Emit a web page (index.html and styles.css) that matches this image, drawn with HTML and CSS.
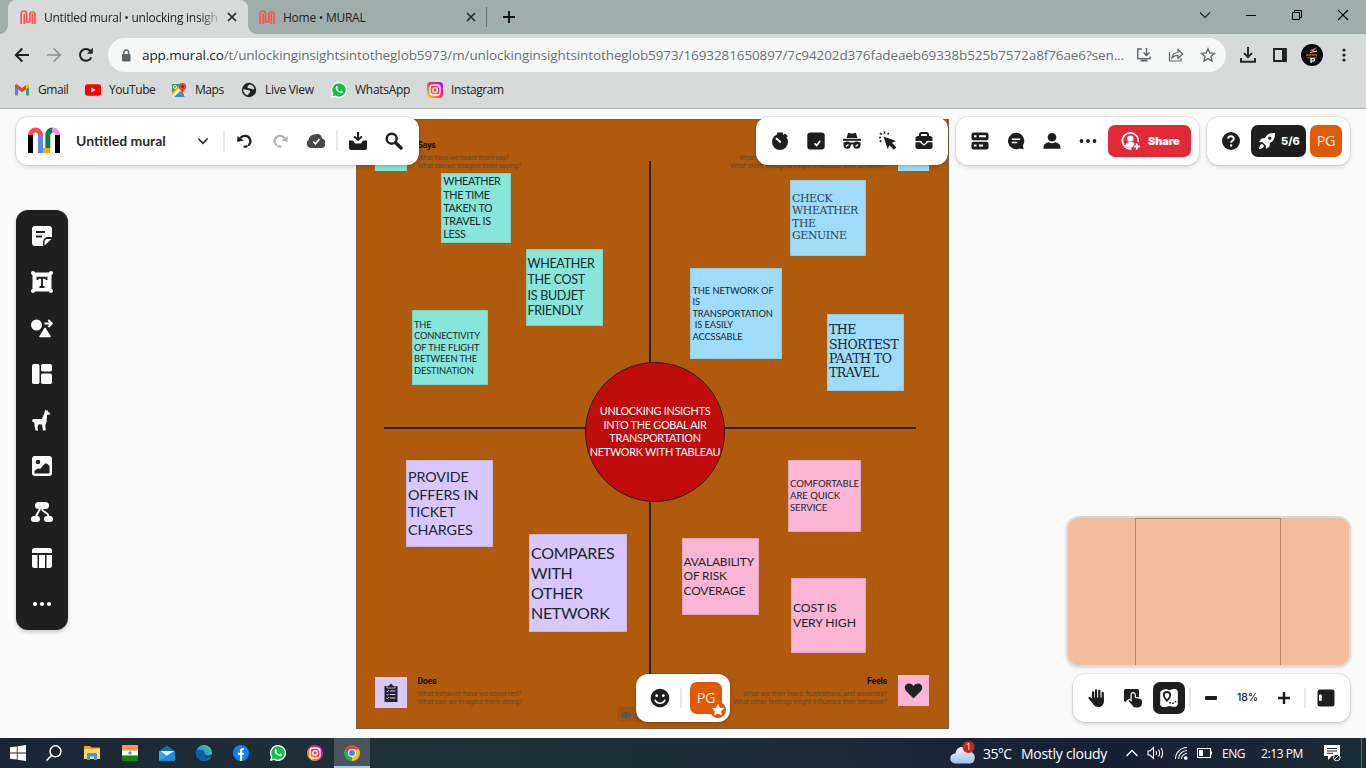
FILE: index.html
```html
<!DOCTYPE html>
<html lang="en">
<head>
<meta charset="utf-8">
<title>Untitled mural</title>
<link rel="stylesheet" href="styles.css">
</head>
<body>
<svg class="defs" width="0" height="0">
  <defs>
    <linearGradient id="ig" x1="0" y1="1" x2="1" y2="0"><stop offset="0" stop-color="#fd5"/><stop offset=".3" stop-color="#ff7a2a"/><stop offset=".6" stop-color="#f0246f"/><stop offset="1" stop-color="#a020f0"/></linearGradient>
    <linearGradient id="edge" x1="0" y1="1" x2="1" y2="0"><stop offset="0" stop-color="#0c59a4"/><stop offset=".5" stop-color="#1b9de2"/><stop offset="1" stop-color="#5fdc5a"/></linearGradient>
    <linearGradient id="cl" x1="0" y1="0" x2="0" y2="1"><stop offset="0" stop-color="#f1f5fd"/><stop offset="1" stop-color="#9fc0f0"/></linearGradient>
    <symbol id="mural" viewBox="0 0 16 16"><path d="M1.2 15V4.7a2.7 2.7 0 0 1 5.4 0V13h3.2V4.7a2.7 2.7 0 0 1 5.2 0V15M4.3 15V4.5M12.3 15V4.5" fill="none" stroke="#ff5252" stroke-width="1.7"/></symbol>
    <symbol id="wa" viewBox="0 0 16 16"><path d="M8 0a8 8 0 0 0-7 11.900L0 16l4.200-1A8 8 0 1 0 8 0z" fill="#fff"/><path d="M8 1.200a6.700 6.700 0 0 0-5.700 10.300L1.700 14.300l2.800-.7A6.700 6.700 0 1 0 8 1.200z" fill="#12c143"/><path d="M5.200 4.200c.4-.3 1-.2 1.200.2l.6 1.300c.1.400-.5.900-.6 1.200.5 1.200 1.500 2 2.700 2.500.4-.1.900-.9 1.200-.8l1.500.8c.4.300.1 1.200-.3 1.500-2.500 1.700-8.800-3.300-6.300-6.700z" fill="#fff"/></symbol>
    <symbol id="igm" viewBox="0 0 16 16"><rect x="3" y="3" width="10" height="10" rx="3" fill="none" stroke="#fff" stroke-width="1.300"/><circle cx="8" cy="8" r="2.300" fill="none" stroke="#fff" stroke-width="1.300"/><circle cx="11" cy="5" r=".7" fill="#fff"/></symbol>
  </defs>
</svg>

<div class="tabs">
  <div class="tab active"><svg width="18" height="16"><use href="#mural"/></svg><span class="tab-title">Untitled mural • unlocking insigh</span><svg class="x" width="10" height="10" viewBox="0 0 10 10"><path d="M1 1l8 8M9 1L1 9" stroke="#222" stroke-width="1.700"/></svg></div>
  <div class="tab"><svg width="18" height="16"><use href="#mural"/></svg><span class="tab-title">Home • MURAL</span><svg class="x" width="10" height="10" viewBox="0 0 10 10"><path d="M1 1l8 8M9 1L1 9" stroke="#222" stroke-width="1.500"/></svg></div>
  <svg class="newtab" width="12" height="12" viewBox="0 0 12 12"><path d="M6 0v12M0 6h12" stroke="#111" stroke-width="1.800"/></svg>
  <div class="wins">
    <svg width="12" height="12" viewBox="0 0 12 12"><path d="M1 3.500l5 5 5-5" fill="none" stroke="#222" stroke-width="1.100"/></svg>
    <svg width="12" height="12" viewBox="0 0 12 12"><path d="M1 6.500h10" stroke="#000"/></svg>
    <svg width="12" height="12" viewBox="0 0 12 12"><path d="M1.500 3.500h7v7h-7zM3.500 3.500v-2h7v7h-2" fill="none" stroke="#000"/></svg>
    <svg width="12" height="12" viewBox="0 0 12 12"><path d="M1 1l10 10M11 1L1 11" stroke="#000" stroke-width="1.100"/></svg>
  </div>
</div>

<div class="nav">
  <div class="navbtns">
    <svg width="16" height="16" viewBox="0 0 16 16"><path d="M15 8H2M8.300 1.500L1.800 8l6.500 6.500" fill="none" stroke="#202124" stroke-width="1.900"/></svg>
    <svg width="16" height="16" viewBox="0 0 16 16"><path d="M1 8h13M7.700 1.500L14.200 8l-6.500 6.500" fill="none" stroke="#8b9090" stroke-width="1.700"/></svg>
    <svg width="16" height="16" viewBox="0 0 16 16"><path d="M13.300 10.300A5.900 5.900 0 1 1 12.400 4" fill="none" stroke="#202124" stroke-width="2"/><path d="M14.800.8v6H8.900z" fill="#202124"/></svg>
  </div>
  <div class="omni">
    <svg width="10" height="13" viewBox="0 0 10 13"><rect x="1" y="5" width="8.500" height="7.500" rx="1" fill="#5f6368"/><path d="M2.900 5.500V3.300a2.350 2.350 0 0 1 4.700 0v2.200" fill="none" stroke="#5f6368" stroke-width="1.400"/></svg>
    <div class="url"><b>app.mural.co</b>/t/unlockinginsightsintotheglob5973/m/unlockinginsightsintotheglob5973/1693281650897/7c94202d376fadeaeb69338b525b7572a8f76ae6?sen...</div>
    <div class="omni-icons">
      <svg width="16" height="16" viewBox="0 0 16 16" fill="none" stroke="#5f6368" stroke-width="1.400"><path d="M6 2H1.800v9.600h12.400V9.500M10.500 1v7M7.500 5.500l3 3 3-3"/><path d="M4.500 13.500h7" stroke-width="2"/></svg>
      <svg width="16" height="16" viewBox="0 0 16 16" fill="none" stroke="#5f6368" stroke-width="1.200"><path d="M1.500 5v9h11.500v-3"/><path d="M4 11c.5-4 3-5.500 6-5.500V2.500L14.800 7 10 11.300V8.400C7.500 8.400 5.500 9 4 11z"/></svg>
      <svg width="16" height="16" viewBox="0 0 16 16" fill="none" stroke="#5f6368" stroke-width="1.300"><path d="M8 1.700l1.800 4.300 4.700.4-3.600 3.100 1.100 4.600L8 11.600l-4 2.500 1.100-4.600-3.600-3.100 4.700-.4z"/></svg>
    </div>
  </div>
  <div class="navright">
    <svg width="16" height="16" viewBox="0 0 16 16" fill="none" stroke="#202124" stroke-width="1.900"><path d="M8 0v10M4 6.200l4 4 4-4M1 11v3.800h14V11"/></svg>
    <svg width="14" height="14" viewBox="0 0 14 14"><path d="M1 1h12v12H1z" fill="none" stroke="#202124" stroke-width="1.800"/><path d="M9 1h4v12H9z" fill="#202124"/></svg>
    <svg width="22" height="22" viewBox="0 0 22 22"><circle cx="11" cy="11" r="11" fill="#050505"/><path d="M8.500 6.500l8-3.500-4 4z" fill="#f8813a"/><path d="M9 8.500l7-1.500" stroke="#eee"/><path d="M5 11.500c3-1.500 7-.5 11-.500" stroke="#c54e19" stroke-width="1.500" fill="none"/><path d="M6 14l4-1M13 14l3-1" stroke="#128048" stroke-width="1.500"/><path d="M10 19v-4.500h2.300a1.300 1.300 0 0 1 0 2.600H10" fill="none" stroke="#fff" stroke-width="1.300"/></svg>
    <svg width="4" height="16" viewBox="0 0 4 16" fill="#202124"><circle cx="2" cy="3" r="1.600"/><circle cx="2" cy="8" r="1.600"/><circle cx="2" cy="13" r="1.600"/></svg>
  </div>
</div>

<div class="bookmarks">
  <div class="bm"><svg width="16" height="16" viewBox="0 0 16 16"><path d="M1 13.500V4l3 2.300v7.200z" fill="#4285f4"/><path d="M12 13.500V6.300L15 4v9.500z" fill="#34a853"/><path d="M1 5V3.500c0-1.200 1.500-1.600 2.500-.8L8 6l4-3v4.200L8 10.300 1.500 5.500z" fill="#ea4335"/><path d="M12 7V3c1.500-1.200 3-.5 3 1v1z" fill="#fbbc04"/></svg><span>Gmail</span></div>
  <div class="bm"><svg width="16" height="16" viewBox="0 0 16 16"><rect y="2.300" width="16" height="11.500" rx="2.500" fill="#f00"/><path d="M6.300 5.500v5L10.700 8z" fill="#fff"/></svg><span>YouTube</span></div>
  <div class="bm"><svg width="16" height="16" viewBox="0 0 16 16"><path d="M1 2h12v13H1z" fill="#34a058"/><path d="M1 12L11 3l3 10-5-4-6 6H1z" fill="#f4f4ee"/><path d="M1 11l8-8h2L1 14z" fill="#fbc116"/><path d="M4 15l5-5 5 5z" fill="#4285f4"/><path d="M11.500 1a3.700 3.700 0 0 1 3.700 3.700c0 2.300-2.500 3.300-3.200 6.800h-1C10.300 8 7.800 7 7.800 4.700A3.700 3.700 0 0 1 11.500 1z" fill="#e84335"/><circle cx="11.500" cy="4.600" r="1.300" fill="#8a1c16"/><circle cx="4" cy="5" r="1.500" fill="none" stroke="#fff"/></svg><span>Maps</span></div>
  <div class="bm"><svg width="16" height="16" viewBox="0 0 16 16"><circle cx="8" cy="8" r="7.200" fill="#202124"/><path d="M8.500 2.500c2 0 4.500 2 5 4.500-2 1-3-.3-4.500-.5S6 6 6.500 4.500z" fill="#d6dbda"/><path d="M2.300 7l4 1c1.500 0 3 .5 3 1.700C9 11 7.500 11 7 13.300 4 13 2 10 2.300 7z" fill="#d6dbda"/></svg><span>Live View</span></div>
  <div class="bm"><svg width="16" height="16"><use href="#wa"/></svg><span>WhatsApp</span></div>
  <div class="bm"><svg width="16" height="16" viewBox="0 0 16 16"><rect width="16" height="16" rx="3.500" fill="url(#ig)"/><use href="#igm"/></svg><span>Instagram</span></div>
</div>

<main class="canvas">
  <section class="board">
    <i class="axis v"></i><i class="axis h"></i>
    <div class="circle">UNLOCKING INSIGHTS<br>INTO THE GOBAL AIR<br>TRANSPORTATION<br>NETWORK WITH TABLEAU</div>

    <div class="chip says"></div>
    <div class="quad q-says"><h3>Says</h3><p>What have we heard them say?<br>What can we imagine them saying?</p></div>
    <div class="chip thinks"></div>
    <div class="quad q-thinks right"><h3>Thinks</h3><p>What are their wants, needs, hopes, and dreams?<br>What other thoughts might influence their behavior?</p></div>
    <div class="chip does"><svg width="16" height="20" viewBox="0 0 16 20"><path d="M1.500 3h13v16h-13z" fill="#222"/><path d="M4 2.500h2a2 2 0 0 1 4 0h2V5H4z" fill="#222" stroke="#d9c8ff" stroke-width=".8"/><path d="M6.800 8h5.500M6.800 11.500h5.500M6.800 15h5.500M3.500 8l.8.8 1.300-1.500M3.500 11.500l.8.800 1.300-1.500M3.500 15l.8.800 1.300-1.500" stroke="#d9c8ff" fill="none"/></svg></div>
    <div class="quad q-does"><h3>Does</h3><p>What behavior have we observed?<br>What can we imagine them doing?</p></div>
    <div class="chip feels"><svg width="19" height="18" viewBox="0 0 19 18"><path d="M9.500 16.500L2.300 9.200C-.7 6 1 1.500 5 1.500c2 0 3.600 1 4.500 2.700C10.400 2.500 12 1.500 14 1.500c4 0 5.700 4.500 2.700 7.700z" fill="#222"/></svg></div>
    <div class="quad q-feels right"><h3>Feels</h3><p>What are their fears, frustrations, and anxieties?<br>What other feelings might influence their behavior?</p></div>

    <div class="note teal n1">WHEATHER<br>THE TIME<br>TAKEN TO<br>TRAVEL IS<br>LESS</div>
    <div class="note teal n2">WHEATHER<br>THE COST<br>IS BUDJET<br>FRIENDLY</div>
    <div class="note teal n3">THE<br>CONNECTIVITY<br>OF THE FLIGHT<br>BETWEEN THE<br>DESTINATION</div>
    <div class="note blue slab n4">CHECK<br>WHEATHER<br>THE<br>GENUINE</div>
    <div class="note blue n5">THE NETWORK OF<br>IS<br>TRANSPORTATION<br>&nbsp;IS EASILY<br>ACCSSABLE</div>
    <div class="note blue slab n6">THE<br>SHORTEST<br>PAATH TO<br>TRAVEL</div>
    <div class="note purple n7">PROVIDE<br>OFFERS IN<br>TICKET<br>CHARGES</div>
    <div class="note purple n8">COMPARES<br>WITH<br>OTHER<br>NETWORK</div>
    <div class="note pink n9">COMFORTABLE<br>ARE QUICK<br>SERVICE</div>
    <div class="note pink n10">AVALABILITY<br>OF RISK<br>COVERAGE</div>
    <div class="note pink n11">COST IS<br>VERY HIGH</div>
    <div class="tag"><svg width="10" height="8" viewBox="0 0 10 8"><path d="M.5 4C2.500.8 7.500.8 9.500 4 7.500 7.200 2.500 7.200.5 4z" fill="none" stroke="#245f8c" stroke-width="1.300"/><circle cx="5" cy="4" r="1.700" fill="#245f8c"/></svg><span>Share</span></div>
  </section>

  <div class="pill p-title">
    <svg class="logo" width="32" height="26" viewBox="0 0 32 26"><path d="M0 8h5v18H0zM27 8h5v18h-5z" fill="#000"/><path d="M10 8h5v18h-5z" fill="#5a87ff"/><path d="M0 8a7.500 7.500 0 0 1 15 0h-5a2.500 2.500 0 0 0-5 0z" fill="#ff4b4b"/><path d="M17.300 21V8c0-4.200 3-7.500 7.200-7.500V6c-1.300 0-2.200 1-2.200 2.300V21z" fill="#058146"/><path d="M24.500.5c4.200 0 7.500 3.300 7.500 7.500h-5c0-1.300-1-2.300-2.500-2.300z" fill="#ff85f5"/><path d="M15 21h7.300v5H15z" fill="#ffaa00"/></svg>
    <span class="title">Untitled mural</span>
    <div class="cell chev"><svg width="10" height="7" viewBox="0 0 10 7"><path d="M.8 1L5 5.300 9.200 1" fill="none" stroke="#222" stroke-width="1.600" stroke-linecap="round"/></svg></div>
    <i class="sep"></i>
    <div class="cell"><svg width="18" height="18" viewBox="0 0 18 18"><path d="M5 5.600A5.400 5.400 0 1 1 8.500 14.600" fill="none" stroke="#1e1e1e" stroke-width="2.200" stroke-linecap="round" stroke-dasharray="17 2.500 10"/><path d="M1.500 3.900l-.3 6.200 6.500-1.500z" fill="#1e1e1e"/></svg></div>
    <div class="cell redo"><svg class="flip" width="18" height="18" viewBox="0 0 18 18"><path d="M5 5.600A5.400 5.400 0 1 1 8.500 14.600" fill="none" stroke="#b4b4b4" stroke-width="2.200" stroke-linecap="round" stroke-dasharray="17 2.500 10"/><path d="M1.500 3.900l-.3 6.200 6.500-1.500z" fill="#b4b4b4"/></svg></div>
    <div class="cell cloudcell"><svg width="20" height="16" viewBox="0 0 20 16"><path d="M5.500 15A4.500 4.500 0 0 1 2.500 7C3 3.500 6 1 9.500 1.500c3-1.500 6.500.5 6.500 4 3 .5 3.500 3.200 2.800 5 .8 2-.3 4.500-3 4.500z" fill="#484848"/><path d="M7.300 8.500l2.200 2.300 4-4.800" fill="none" stroke="#fff" stroke-width="1.700"/></svg></div>
    <i class="sep"></i>
    <div class="cell"><svg width="18" height="20" viewBox="0 0 18 20"><path d="M0 9.500h4l2 3h6l2-3h4V17a2 2 0 0 1-2 2H2a2 2 0 0 1-2-2z" fill="#1e1e1e"/><path d="M9 1v7.500M5.200 5.500L9 9l3.800-3.500" fill="none" stroke="#1e1e1e" stroke-width="2"/></svg></div>
    <div class="cell"><svg width="18" height="18" viewBox="0 0 18 18"><circle cx="6.700" cy="6.700" r="5" fill="none" stroke="#1e1e1e" stroke-width="2.400"/><path d="M10.700 10.700l5.300 5.300" stroke="#1e1e1e" stroke-width="3.400" stroke-linecap="round"/></svg></div>
  </div>

  <div class="pill p-tools">
    <div class="cell"><svg width="18" height="20" viewBox="0 0 18 20"><circle cx="9" cy="11" r="8" fill="#1e1e1e"/><path d="M6 1.500h6v3H6zM14 2.500l2.800 2.800-1.600 1.500-2.800-2.700z" fill="#1e1e1e"/><path d="M5.500 7.500L9.300 11" stroke="#fff" stroke-width="1.800" stroke-linecap="round"/></svg></div>
    <div class="cell"><svg width="18" height="18" viewBox="0 0 18 18"><rect x=".3" y=".5" width="17.400" height="17" rx="3" fill="#1e1e1e"/><path d="M7.500 11.300l2.200 2.200 3.500-4.700" fill="none" stroke="#fff" stroke-width="1.700"/></svg></div>
    <div class="cell"><svg width="20" height="18" viewBox="0 0 20 18"><path d="M4.500 6L6 1.200Q6.500.5 8 1.200q2 .8 4 0 1.500-.7 2 0L15.500 6z" fill="#1e1e1e"/><path d="M1 7.800h18" stroke="#1e1e1e" stroke-width="2"/><circle cx="5.200" cy="13.200" r="3.600" fill="#1e1e1e"/><circle cx="14.800" cy="13.200" r="3.600" fill="#1e1e1e"/><path d="M1.500 11.500h17" stroke="#1e1e1e" stroke-width="2"/><path d="M4 14.500l2.500-2M13.500 14.500l2.500-2" stroke="#fff" stroke-width="1.200"/></svg></div>
    <div class="cell"><svg width="20" height="20" viewBox="0 0 20 20"><path d="M5.500 5.500L18 10l-4 1.800 4.300 4.600-2.300 2.300-4.500-4.400L9.600 18z" fill="#1e1e1e"/><path d="M6.500.5v2.300M1 6.500h2M2 2l1.800 1.800M10.800 2L9.500 3.500M1.800 10.800l1.600-1.300" stroke="#1e1e1e" stroke-width="1.600"/></svg></div>
    <div class="cell"><svg width="18" height="18" viewBox="0 0 18 18"><path d="M5 4.500V2.500A1.500 1.500 0 0 1 6.500 1h5A1.500 1.500 0 0 1 13 2.500v2" fill="none" stroke="#1e1e1e" stroke-width="2"/><path d="M3 4h12a2.500 2.500 0 0 1 2.500 2.500V9H.5V6.500A2.500 2.500 0 0 1 3 4z" fill="#1e1e1e"/><path d="M.5 10.300h17V15a2 2 0 0 1-2 2h-13a2 2 0 0 1-2-2z" fill="#1e1e1e"/><path d="M6 9v1.500L9 13l3-2.500V9" fill="#1e1e1e" stroke="#fff" stroke-width="1.200"/></svg></div>
  </div>

  <div class="pill p-share">
    <div class="cell"><svg width="18" height="18" viewBox="0 0 18 18"><rect x=".5" y=".5" width="17" height="7.700" rx="2" fill="#1e1e1e"/><rect x=".5" y="9.800" width="17" height="7.700" rx="2" fill="#1e1e1e"/><path d="M3 4.300h2.500M3 13.600h2.500M8 4.300h7M8 13.600h4" stroke="#fff" stroke-width="2"/></svg></div>
    <div class="cell"><svg width="18" height="18" viewBox="0 0 18 18"><path d="M9 .8a8.200 8.200 0 1 0 3.500 15.700l4 .8-.5-4A8.200 8.200 0 0 0 9 .8z" fill="#1e1e1e"/><path d="M4.800 7.300h8.400M4.800 10.600h5.500" stroke="#fff" stroke-width="1.500"/></svg></div>
    <div class="cell"><svg width="18" height="18" viewBox="0 0 18 18"><circle cx="9" cy="5.300" r="4.300" fill="#1e1e1e"/><path d="M.5 16.800c0-4 1.500-6 5.500-6.500 1.500 1.200 4.500 1.200 6 0 4 .5 5.500 2.500 5.500 6.500z" fill="#1e1e1e"/></svg></div>
    <div class="cell"><svg width="18" height="4" viewBox="0 0 18 4" fill="#1e1e1e"><circle cx="2.500" cy="2" r="1.900"/><circle cx="9" cy="2" r="1.900"/><circle cx="15.500" cy="2" r="1.900"/></svg></div>
    <div class="sharebtn"><svg width="20" height="20" viewBox="0 0 20 20" fill="none" stroke="#fff"><path d="M10.500 17.800A8 8 0 1 1 17.300 11" stroke-width="1.700"/><circle cx="9.300" cy="7.600" r="3.200" fill="#fff" stroke="none"/><path d="M4 15c.6-3 2.300-4 5.300-4s3.700.5 4.400 1.700L11 16.500C8 17 6 16.500 4 15z" fill="#fff" stroke="none"/><path d="M15.800 12.500v6M12.800 15.500h6" stroke-width="1.800"/></svg><span>Share</span></div>
  </div>

  <div class="pill p-user">
    <div class="cell"><svg width="20" height="20" viewBox="0 0 20 20"><circle cx="10" cy="10" r="9" fill="#1e1e1e"/><path d="M7.200 7.700c.2-3.300 5.700-3.100 5.600.1 0 2-2.700 2-2.700 4" fill="none" stroke="#fff" stroke-width="1.900"/><circle cx="10.100" cy="14.500" r="1.200" fill="#fff"/></svg></div>
    <div class="rocket"><svg width="18" height="18" viewBox="0 0 18 18"><path d="M17 1c-5-.3-8 1.500-10 5L3.500 6.500 1 10l3.500.2 3.300 3.300L8 17l3.500-2.500.5-3.500c3.500-2 5.300-5 5-10z" fill="#fff"/><circle cx="11.800" cy="6.200" r="1.600" fill="#1e1e1e"/><path d="M4.300 12C2 12.500 1.500 14 1 17c3-.5 4.500-1 5-3.300z" fill="#fff"/></svg><span>5/6</span></div>
    <div class="avatar">PG</div>
  </div>

  <aside class="side">
    <svg viewBox="0 0 22 22"><path d="M4 1h14a3 3 0 0 1 3 3v8h-4a5 5 0 0 0-5 5v4H4a3 3 0 0 1-3-3V4a3 3 0 0 1 3-3z"/><path d="M5 7h9M5 11.500h6" stroke="#1f1f1f" stroke-width="1.800"/><path d="M13.500 20.500V17a3 3 0 0 1 3-3h4z"/></svg>
    <svg viewBox="0 0 22 22"><path d="M1.500 1.500h19v19h-19z"/><g><circle cx="2" cy="2" r="2"/><circle cx="20" cy="2" r="2"/><circle cx="2" cy="20" r="2"/><circle cx="20" cy="20" r="2"/></g><path d="M6.500 9V6.700h9V9M11 6.500v9.500M8.500 16h5" fill="none" stroke="#1f1f1f" stroke-width="1.900"/></svg>
    <svg viewBox="0 0 22 22"><circle cx="5.500" cy="8" r="5.500"/><path d="M14 11.500l5 8h-10z" stroke="#fff" stroke-width="1.500" stroke-linejoin="round"/><path d="M13.500 6.500h7M17.300 3l3.500 3.500-3.500 3.500" fill="none" stroke="#fff" stroke-width="1.900"/></svg>
    <svg viewBox="0 0 22 22"><rect x="1" y="1" width="7.500" height="20" rx="1.800"/><rect x="10" y="1" width="11" height="7.500" rx="1.800"/><rect x="10" y="10.500" width="11" height="10.500" rx="1.800"/></svg>
    <svg viewBox="0 0 24 24"><path d="M15.500.5l1.200 1.300L18 1l.3 1.800 2.700 1.700-.5 1.500-3 .5L17 14l-1.300 3.500.3 6h-3l-1-6.500-3.500-.3-1.500 3 .8 3.800H5L4 19l-.3-3.500L2.300 14l-1.300-.7.8-2 3-.5 7 .2L14.500 5z"/></svg>
    <svg viewBox="0 0 22 22"><rect x="1" y="1" width="20" height="20" rx="3"/><circle cx="7" cy="7" r="2.200" fill="#1f1f1f"/><path d="M3.500 18.500V16c2-2 3.500-3 5.500-2l4.500-5c2-1.300 4 .5 5 2.500v6q0 1-1 1z" fill="#1f1f1f"/></svg>
    <svg viewBox="0 0 22 22"><rect x="4" y="1" width="14" height="7" rx="3.500"/><rect x="0" y="15" width="9" height="6" rx="3"/><rect x="13" y="15" width="9" height="6" rx="3"/><path d="M9 8L5 15M11 8c1 4 6 3 6.500 7" fill="none" stroke="#fff" stroke-width="1.900"/></svg>
    <svg viewBox="0 0 22 22"><path d="M1 6V3.500A2.500 2.500 0 0 1 3.500 1h15A2.500 2.500 0 0 1 21 3.500V6zM1 8h5.500v13h-3A2.500 2.500 0 0 1 1 18.500zM8 8h6v13H8zM15.500 8H21v10.500a2.500 2.500 0 0 1-2.500 2.500h-3z"/></svg>
    <svg viewBox="0 0 22 22"><circle cx="4" cy="11" r="2.100"/><circle cx="11" cy="11" r="2.100"/><circle cx="18" cy="11" r="2.100"/></svg>
  </aside>

  <div class="minimap"><i></i></div>

  <div class="pill p-zoom">
    <div class="cell"><svg width="20" height="20" viewBox="0 0 20 20"><path d="M6 12V4.500M9 11V2.500M12.300 11V2.800M15.700 12V4.800" stroke="#1e1e1e" stroke-width="2.300" stroke-linecap="round"/><path d="M5 9.500h11.900V13c0 4-2.500 6-5.500 6-2.500 0-4-.8-5.300-3L1.500 10.500c-.7-1.200 1-2.200 2-1.200l2 2z" fill="#1e1e1e"/></svg></div>
    <div class="cell"><svg width="20" height="20" viewBox="0 0 20 20"><path d="M2.500 1h12A1.500 1.500 0 0 1 16 2.500V12H4l-1.500 2L1 13V2.500A1.500 1.500 0 0 1 2.500 1z" fill="#1e1e1e"/><path d="M8.700 14V6.800a1.500 1.500 0 0 1 3 0v3l5.400 1.200q1.900.5 1.900 2.200V15c0 3-2 4.500-4.500 4.500H13c-2 0-3-.8-4-2.500l-3.500-4c.3-1.300 2-1 3.200 1z" fill="#1e1e1e" stroke="#fff" stroke-width="2.400" paint-order="stroke"/></svg></div>
    <div class="mapbtn"><svg width="20" height="20" viewBox="0 0 20 20"><path d="M3.500 2L7 1l3.500 1.200L14 1h3l1.800 2v13.500L17 18.800h-3.500L10.500 18 7 19H3.200L1.200 17V4z" fill="#fff"/><path d="M8 12.800C6.200 10.500 4.800 9 4.800 7.200a3.200 3.200 0 0 1 6.400 0c0 1.800-1.400 3.300-3.200 5.600z" fill="#fff" stroke="#1e1e1e" stroke-width="1.800"/><path d="M10.300 14.800h1.600M13.200 15.300h1.600M15.800 13.700h1.400" stroke="#1e1e1e" stroke-width="1.500"/></svg></div>
    <i class="sep"></i>
    <div class="cell minus"><svg width="12" height="4"><rect width="12" height="4" rx="1" fill="#1e1e1e"/></svg></div>
    <span class="pct">18%</span>
    <div class="cell"><svg width="12" height="12" viewBox="0 0 12 12"><path d="M6 .5v11M.5 6h11" stroke="#1e1e1e" stroke-width="2.500" stroke-linecap="round"/></svg></div>
    <i class="sep"></i>
    <div class="cell last"><svg width="18" height="18" viewBox="0 0 18 18"><rect x=".5" y=".5" width="17" height="17" rx="2.500" fill="#1e1e1e"/><rect x="2" y="5.500" width="2.800" height="6.500" rx="1" fill="#fff"/></svg></div>
  </div>

  <div class="pill p-me">
    <svg width="20" height="20" viewBox="0 0 20 20"><circle cx="10" cy="10" r="9.300" fill="#1e1e1e"/><circle cx="6.700" cy="7.700" r="1.400" fill="#fff"/><circle cx="13.300" cy="7.700" r="1.400" fill="#fff"/><path d="M5 11.800c1.500 4.500 8.500 4.500 10 0" fill="none" stroke="#fff" stroke-width="1.600"/></svg>
    <i class="sep"></i>
    <div class="avatar">PG<svg class="star" width="16" height="16" viewBox="0 0 16 16"><circle cx="8" cy="8" r="8" fill="#de5a05"/><path d="M8 1.800l1.900 4 4.300.5-3.200 3 .9 4.300L8 11.500l-3.900 2.100.9-4.300-3.200-3 4.300-.5z" fill="#fff"/></svg></div>
  </div>
</main>

<footer class="taskbar">
  <div class="apps">
    <span><svg width="16" height="16" viewBox="0 0 16 16" fill="#fff"><path d="M0 2.300l6.800-.9v6.200H0zM7.600 1.300L16 0v7.600H7.600zM0 8.400h6.800v6.200L0 13.700zM7.600 8.400H16V16l-8.400-1.200z"/></svg></span>
    <span><svg width="16" height="16" viewBox="0 0 16 16" fill="none" stroke="#fff" stroke-width="1.500"><circle cx="9.500" cy="6.300" r="5.500"/><path d="M5.600 10.400L.5 15.500"/></svg></span>
    <span><svg width="16" height="16" viewBox="0 0 16 16"><path d="M0 1h6l1.500 1.500H16V14H0z" fill="#e8a81c"/><path d="M0 4h16v10H0z" fill="#ffd768"/><path d="M3 15V9.500a1.500 1.500 0 0 1 1.500-1.500h7A1.500 1.500 0 0 1 13 9.500V15h-3v-3.500H6V15z" fill="#3b9be6"/></svg></span>
    <span><svg width="16" height="16" viewBox="0 0 16 16"><path d="M0 0h16v5.300H0z" fill="#ff9a3c"/><path d="M0 5.300h16v5.400H0z" fill="#fff"/><path d="M0 10.700h16V16H0z" fill="#138808"/><circle cx="8" cy="8" r="1.700" fill="#8088c4"/></svg></span>
    <span><svg width="16" height="16" viewBox="0 0 16 16"><path d="M0 6l8-5.500L16 6v9.500H0z" fill="#0f6cbd"/><path d="M1 6h14l-7 5z" fill="#f4f6fa"/><path d="M0 6l8 5 8-5v9.500H0z" fill="#35a9ee"/><path d="M0 15.500L8 11l8-5v9.500z" fill="#1e8ce0"/></svg></span>
    <span><svg width="16" height="16" viewBox="0 0 16 16"><circle cx="8" cy="8" r="8" fill="url(#edge)"/><path d="M1 5.500C4 4 8 5 8.500 7c-2 1-1.500 4 1.500 4.800 2 .5 4 0 5.300-1.200C13 15.500 8 17 4 14.700 1 13 0 9 1 5.500z" fill="#135ba8"/><path d="M8.500 7c-1 2 1 4 3.500 3.700L16 9.500v1.300c-2 1.500-5 1.500-6.500.7C7.500 10.500 7 8.300 8.500 7z" fill="#1e2c37"/></svg></span>
    <span><svg width="16" height="16" viewBox="0 0 16 16"><circle cx="8" cy="8" r="8" fill="#0f82f5"/><path d="M7 16v-6H5V7.700h2V6c0-2.200 1.400-3.300 3.900-2.900v2c-1.300-.1-1.700.3-1.700 1.100v1.500h1.700l-.4 2.300H9.200v6z" fill="#fff"/></svg></span>
    <span><svg width="16" height="16"><use href="#wa"/></svg></span>
    <span><svg width="16" height="16" viewBox="0 0 16 16"><circle cx="8" cy="8" r="8" fill="url(#ig)"/><use href="#igm"/></svg></span>
    <span class="on"><svg width="16" height="16" viewBox="0 0 16 16"><path d="M8 8L1.100 4A8 8 0 0 1 14.900 4z" fill="#ea4335"/><path d="M8 8l6.900-4A8 8 0 0 1 8 16z" fill="#fbc116"/><path d="M8 8v8A8 8 0 0 1 1.100 4z" fill="#34a853"/><path d="M8 4h6.900l.5 1.200L11 8z" fill="#fbc116"/><circle cx="8" cy="8" r="3.900" fill="#fff"/><circle cx="8" cy="8" r="3" fill="#4285f4"/></svg></span>
  </div>
  <div class="tray">
    <svg class="cloud" width="26" height="24" viewBox="0 0 26 24"><path d="M5 22.500a5 5 0 0 1 .5-10C6 8 9 5.500 12.500 6c3 0 5 2.500 5.300 5 4-1 7 2 7 5.500 0 3-1.500 6-5 6z" fill="url(#cl)"/><circle cx="18.500" cy="6" r="6" fill="#c42b1c"/></svg>
    <span class="badge">1</span>
    <span class="temp">35°C</span><span class="sky">Mostly cloudy</span>
    <svg class="up" width="12" height="8" viewBox="0 0 12 8"><path d="M.5 7L6 1.500 11.500 7" fill="none" stroke="#fff" stroke-width="1.300"/></svg>
    <svg class="vol" width="18" height="14" viewBox="0 0 18 14" fill="none" stroke="#fff" stroke-width="1.100"><path d="M1 5h2l3.500-3.500v11L3 9H1zM9 5q1 2 0 4M11.500 3.500q2.200 3.500 0 7M14 2q3.300 5 0 10"/></svg>
    <svg class="wifi" width="14" height="14" viewBox="0 0 14 14" fill="none" stroke="#fff" stroke-width="1.100"><path d="M1.500 13A11.500 11.500 0 0 1 13 1.500M4.500 13A8.500 8.500 0 0 1 13 4.500M7.500 13A5.500 5.500 0 0 1 13 7.500"/><circle cx="11.800" cy="12" r="1.300" fill="#fff"/></svg>
    <svg class="bat" width="16" height="10" viewBox="0 0 16 10"><path d="M.5.500h13v9H.5zM14.500 3.500v3" fill="none" stroke="#fff" stroke-width="1.100"/><path d="M2 2h4v6H2z" fill="#fff"/></svg>
    <span class="lang">ENG</span><span class="time">2:13 PM</span>
    <svg class="act" width="17" height="17" viewBox="0 0 17 17"><path d="M0 0h16v11H8l-4 4v-4H0z" fill="#fff"/><path d="M3 3.500h10M3 6h10M3 8.300h6" stroke="#1c2d38"/><circle cx="12.800" cy="12.500" r="3.300" fill="#1c2d38" stroke="#fff" stroke-width=".9"/><path d="M10.500 14.500l4.500-4.500" stroke="#fff"/></svg>
    <i class="peek"></i>
  </div>
</footer>
</body>
</html>
```

FILE: styles.css
```css
* { box-sizing: border-box; }
body { margin: 0; width: 1366px; height: 768px; overflow: hidden; display: flex; flex-direction: column; font-family: "Open Sans", sans-serif; font-size: 12px; color: #202124; background: #fafafa; }
svg { display: block; flex: none; }
.defs { position: absolute; }

/* browser chrome */
.tabs { height: 34px; flex: none; background: #a0aeab; display: flex; align-items: center; padding-left: 8px; }
.tab { width: 239px; height: 34px; padding: 0 11px 0 10px; display: flex; align-items: center; gap: 6px; position: relative; }
.tab.active { width: 240px; padding-left: 11px; background: #d6dbda; border-radius: 8px 8px 0 0; }
.tab.active::before, .tab.active::after { content: ""; position: absolute; bottom: 0; width: 8px; height: 8px; }
.tab.active::before { left: -8px; background: radial-gradient(circle at 0 0, transparent 7.5px, #d6dbda 8px); }
.tab.active::after { right: -8px; background: radial-gradient(circle at 100% 0, transparent 7.5px, #d6dbda 8px); }
.tab-title { flex: 1; white-space: nowrap; letter-spacing: -.25px; margin-left: 1px; }
.active .tab-title { -webkit-mask-image: linear-gradient(90deg, #000 90%, rgba(0,0,0,.15)); mask-image: linear-gradient(90deg, #000 90%, rgba(0,0,0,.15)); }
.tab .x { margin-left: 3px; }
.newtab { margin-left: 16px; }
.tab + .tab::after { content: ""; position: absolute; right: 0; top: 7px; height: 20px; width: 1px; background: #68726f; }
.wins { margin-left: auto; display: flex; gap: 34px; padding-right: 17px; padding-bottom: 5px; }
.nav { height: 42px; flex: none; background: #d6dbda; display: flex; align-items: center; }
.navbtns { display: flex; gap: 16px; padding-left: 14px; width: 108px; flex: none; }
.omni { width: 1118px; height: 34px; border-radius: 17px; background: #f6f8f7; display: flex; align-items: center; padding-left: 13px; }
.url { margin-left: 11px; width: 986px; white-space: nowrap; font-size: 13.5px; letter-spacing: -.099px; color: #6b6f72; }
.url b { font-weight: 400; color: #202124; }
.omni-icons { display: flex; gap: 16px; margin-left: 8px; }
.navright { display: flex; align-items: center; margin-left: 14px; gap: 17px; }
.navright svg:nth-child(3) { margin-left: -3px; }
.navright svg:nth-child(4) { margin-left: 2px; }
.bookmarks { height: 33px; flex: none; background: #d6dbda; border-bottom: 1px solid #a9b0b2; display: grid; grid-template-columns: 71px 86px 70px 90px 96px auto; padding: 0 0 5px 14px; align-items: center; }
.bm { display: flex; gap: 8px; align-items: center; letter-spacing: -.42px; white-space: nowrap; }
.bm:nth-child(4), .bm:nth-child(5) { letter-spacing: -.28px; }

/* mural canvas */
.canvas { flex: 1; position: relative; background: #fafafa; overflow: hidden; }
.board { position: absolute; left: 356px; top: 10px; width: 593px; height: 610px; background: #b05a0e; border: 1px solid #75604b; font-family: Lato, sans-serif; }
.axis { position: absolute; background: #222; }
.axis.v { left: 292px; top: 41px; width: 2px; height: 530px; }
.axis.h { left: 27px; top: 307px; width: 532px; height: 2px; }
.circle { position: absolute; left: 228px; top: 242px; width: 140px; height: 140px; border-radius: 50%; background: #c00c0c; border: 1.500px solid #2a1d1a; padding-bottom: 2px; color: #fff; text-align: center; white-space: nowrap; font-size: 10.900px; line-height: 13.500px; letter-spacing: -.29px; display: grid; place-content: center; }
.note { position: absolute; display: flex; align-items: center; padding-left: 2px; color: #18262a; white-space: nowrap; box-shadow: inset 0 0 0 .5px rgba(90,90,60,.3); }
.teal { background: #87e6d9; } .blue { background: #9edcfa; } .purple { background: #d9c8ff; } .pink { background: #fcb5d4; }
.slab { font-family: "DejaVu Serif", serif; }
.n1 { left: 84.300px; top: 52.500px; width: 70px; height: 70px; font-size: 10.800px; line-height: 13.200px; letter-spacing: -.32px; }
.n2 { left: 168.500px; top: 129px; width: 77.500px; height: 77px; font-size: 12.500px; line-height: 15.700px; letter-spacing: -.28px; }
.n3 { left: 55px; top: 190px; width: 75.500px; height: 75px; font-size: 9.300px; line-height: 11.500px; letter-spacing: -.12px; }
.n4 { left: 433px; top: 59.500px; width: 76px; height: 76px; font-size: 10.900px; line-height: 12.400px; letter-spacing: -.38px; color: #2c4450; }
.n5 { left: 333.400px; top: 148px; width: 91.500px; height: 91px; font-size: 9.300px; line-height: 11.500px; letter-spacing: -.08px; }
.n6 { left: 470px; top: 193.500px; width: 77.400px; height: 77px; font-size: 12.500px; line-height: 14.400px; letter-spacing: -.5px; }
.n7 { left: 49px; top: 339.500px; width: 87px; height: 87px; font-size: 14.300px; line-height: 17.500px; letter-spacing: -.1px; }
.n8 { left: 172px; top: 414px; width: 98px; height: 98px; font-size: 16px; line-height: 20px; letter-spacing: -.3px; }
.n9 { left: 431px; top: 339.500px; width: 73px; height: 72.500px; font-size: 9.600px; line-height: 12px; letter-spacing: -.08px; }
.n10 { left: 324.500px; top: 418px; width: 77.500px; height: 77px; font-size: 11.900px; line-height: 14.500px; letter-spacing: -.13px; }
.n11 { left: 434px; top: 457.500px; width: 75px; height: 75px; font-size: 12.200px; line-height: 15px; letter-spacing: -.1px; }
.chip { position: absolute; width: 31.500px; height: 31px; display: grid; place-items: center; }
.says { left: 18.300px; top: 20px; background: #87e6d9; }
.thinks { left: 540.500px; top: 20px; background: #9edcfa; }
.does { left: 18.300px; top: 557px; background: #d9c8ff; }
.feels { left: 540.500px; top: 555px; background: #fcb5d4; }
.quad { position: absolute; left: 60.500px; font: 6.900px/8.300px Roboto, sans-serif; color: #6a4727; white-space: nowrap; letter-spacing: -.13px; }
.quad.right { left: auto; right: 61px; text-align: right; letter-spacing: -.03px; }
.quad h3 { margin: 0 0 3.500px; font-size: 8.700px; line-height: 10px; color: #120c06; font-weight: 700; letter-spacing: -.15px; }
.quad p { margin: 0; }
.q-says, .q-thinks { top: 20.300px; }
.q-does, .q-feels { top: 556.400px; }
.q-does { letter-spacing: -.01px; }
.tag { position: absolute; left: 260px; top: 587px; height: 15px; padding: 0 6px 0 4px; border-radius: 4px; background: #a3530f; color: #245f8c; display: flex; align-items: center; gap: 3px; font-size: 8px; font-weight: 700; }

/* floating toolbars */
.pill { position: absolute; height: 48px; background: #fff; border-radius: 12px; box-shadow: 0 0 0 .7px rgba(0,0,0,.1), 0 2px 4px rgba(0,0,0,.15); display: flex; align-items: center; }
.cell { width: 36px; height: 36px; flex: none; display: grid; place-items: center; }
.sep { width: 2px; height: 20px; background: #e9e9e9; flex: none; }
.p-title { left: 16px; top: 8px; width: 403px; padding-left: 12px; }
.logo { margin-top: -2px; }
.title { margin: -2px 0 0 16px; width: 108.500px; font: 700 14px Lato, sans-serif; color: #2b2b2b; }
.chev { margin-right: 2px; }
.p-title .sep + .cell { margin-left: 2px; }
.redo { margin-left: -.5px; }
.cloudcell { margin-right: 1.500px; }
.p-tools { left: 756px; top: 8px; width: 192px; padding-left: 6px; }
.flip { transform: scaleX(-1); }
.p-share { left: 956px; top: 8px; width: 243px; padding-left: 6px; }
.sharebtn { margin-left: 2px; width: 83px; height: 32px; border-radius: 7px; background: #e22a37; color: #fff; display: flex; align-items: center; gap: 7.500px; padding: 0 0 1px 12.500px; font: 900 11px Inter, sans-serif; letter-spacing: -.1px; }
.p-user { left: 1206.500px; top: 8px; width: 143.500px; padding-left: 6px; }
.rocket { margin: 0 4px 0 2.500px; width: 55px; height: 32px; border-radius: 7px; background: #1e1e1e; color: #fff; display: flex; align-items: center; gap: 5px; padding: 0 0 1px 7px; font: 800 11px Inter, sans-serif; }
.avatar { position: relative; width: 32px; height: 32px; border-radius: 7px; background: #de5a05; color: #fbe9dc; display: grid; place-items: center; padding-bottom: 1px; font-size: 14.500px; letter-spacing: -.4px; }
.side { position: absolute; left: 16px; top: 101px; width: 52px; height: 420px; padding: 3px 0; border-radius: 12px; background: #1f1f1f; fill: #fff; box-shadow: 0 2px 4px rgba(0,0,0,.2); display: grid; grid-template-rows: repeat(9, 46px); place-items: center; }
.side svg { width: 22px; height: 22px; }
.minimap { position: absolute; left: 1065.500px; top: 407px; width: 285.500px; height: 151px; border-radius: 13px; background: #f2bd9d; border: 2px solid #d9dadb; box-shadow: 0 1px 3px rgba(0,0,0,.12); display: flex; padding-left: 67.500px; }
.minimap i { width: 146px; border: solid #b5835f; border-width: 1px 1px 0; }
.p-zoom { left: 1073px; top: 565px; width: 277px; padding-left: 6px; }
.mapbtn { margin: 0 4px 0 2px; width: 32px; height: 32px; border-radius: 7px; background: #1e1e1e; display: grid; place-items: center; }
.minus { margin-left: 2px; }
.pct { width: 37px; margin-top: -1px; text-align: center; font: 500 10.500px Inter, sans-serif; letter-spacing: -.1px; }
.pct + .cell { margin-right: 2px; }
.last { margin-left: 2px; }
.p-me { left: 636px; top: 565px; width: 94px; padding-left: 14px; }
.p-me .sep { margin: 0 8px 0 10px; }
.star { position: absolute; right: -4px; bottom: -4px; }

/* taskbar */
.taskbar { height: 30px; flex: none; background: linear-gradient(90deg, #1b2635 0, #1f3137 30%, #1c2b36 60%, #171f33 82%, #1a2c36 100%); color: #fff; display: flex; justify-content: space-between; }
.apps { display: grid; grid-template-columns: 36px 36px 40px 36px 38px 36px 38px 36px 38px 36px; }
.apps span { display: grid; place-items: center; }
.apps .on { background: #48555c; border-bottom: 2px solid #9ccdf8; padding-top: 2px; }
.tray { position: relative; display: flex; align-items: center; width: 416px; font-size: 12px; white-space: nowrap; }
.badge { position: absolute; left: 16px; top: 3px; font-size: 9px; line-height: 12px; }
.temp { width: 38px; margin-left: 7px; font-size: 14px; letter-spacing: -.58px; }
.sky { width: 105px; font-size: 14px; letter-spacing: -.28px; }
.vol { margin-left: 9px; } .wifi { margin-left: 9px; } .bat { margin-left: 9px; }
.lang { margin-left: 9px; width: 39px; letter-spacing: -.48px; }
.time { width: 63px; letter-spacing: -.41px; }
.peek { position: absolute; right: 4px; top: 0; bottom: 0; width: 1px; background: #5a6670; }
```
